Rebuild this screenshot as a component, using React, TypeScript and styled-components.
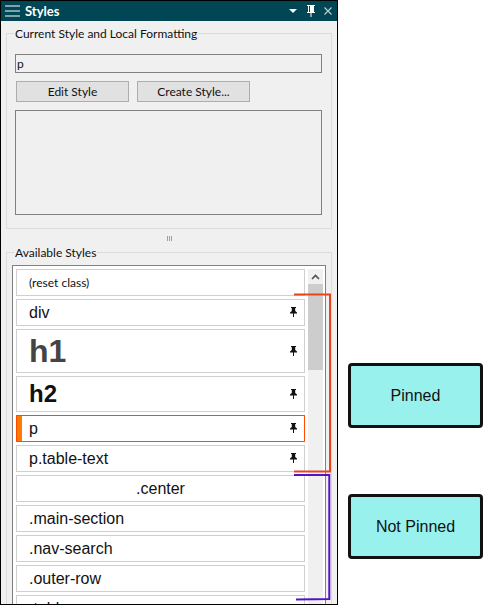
import React from "react";
import styled, { createGlobalStyle } from "styled-components";

const GlobalStyle = createGlobalStyle`
    html, body {
        margin: 0;
        padding: 0;
        background: #fff;
    }
`;

const Page = styled.div`
    position: relative;
    display: flex;
    width: 492px;
    height: 605px;
    overflow: hidden;
    font-family: "Lato", "Noto Sans", sans-serif;
    font-size: 12px;
    color: #111;
`;

const Panel = styled.div`
    width: 338px;
    height: 605px;
    flex: none;
    box-sizing: border-box;
    border: 1px solid #000;
    background: #f0f0f0;
    overflow: hidden;
`;

const TitleBar = styled.div`
    display: flex;
    align-items: center;
    height: 20px;
    margin-bottom: 4px;
    padding: 0 5px 0 4px;
    background: #004654;
    color: #fff;
`;

const TitleText = styled.span`
    margin-left: 5px;
    font-size: 13px;
    font-weight: 700;
    flex: 1;
`;

const TitleButtons = styled.div`
    display: flex;
    align-items: center;
    gap: 9px;
`;

const MenuArrow = styled.svg`
    margin-right: 1px;
`;

const Group = styled.fieldset<{ $height: number }>`
    box-sizing: border-box;
    height: ${(p) => p.$height}px;
    margin: 0 5px;
    padding: 0;
    min-width: 0;
    border: 1px solid #dcdcdc;
`;

const Legend = styled.legend`
    margin-left: 7px;
    padding: 0 1px;
    height: 16px;
    line-height: 18px;
`;

const CurrentBody = styled.div`
    display: flex;
    flex-direction: column;
    padding: 13px 9px 0 8px;
`;

const TextField = styled.div`
    box-sizing: border-box;
    height: 19px;
    padding-left: 1px;
    border: 1px solid #808080;
    line-height: 18px;
`;

const ButtonRow = styled.div`
    display: flex;
    gap: 8px;
    margin: 8px 0 8px 1px;
`;

const PushButton = styled.div`
    box-sizing: border-box;
    width: 113px;
    height: 21px;
    border: 1px solid #adadad;
    background: #e1e1e1;
    text-align: center;
    line-height: 20px;
`;

const PreviewBox = styled.div`
    box-sizing: border-box;
    height: 105px;
    border: 1px solid #808080;
    background: #f0f0f0;
`;

const Splitter = styled.div`
    display: flex;
    justify-content: center;
    gap: 1px;
    height: 15px;
    padding-top: 7px;
    box-sizing: border-box;

    i {
        width: 1px;
        height: 5px;
        background: #a0a0a0;
    }
`;

const ListFrame = styled.div`
    display: flex;
    box-sizing: border-box;
    height: 400px;
    margin: 5px 5px 0 5px;
    padding: 3px 2px 0 3px;
    border: 1px solid #808080;
    background: #fff;
`;

const List = styled.div`
    display: flex;
    flex-direction: column;
    gap: 3px;
    width: 289px;
    flex: none;
`;

const Item = styled.div<{ $height?: number; $size?: number; $bold?: boolean; $active?: boolean; $center?: boolean; $ui?: boolean }>`
    position: relative;
    display: flex;
    align-items: center;
    justify-content: ${(p) => (p.$center ? "center" : "flex-start")};
    box-sizing: border-box;
    flex: none;
    height: ${(p) => p.$height ?? 27}px;
    padding-left: ${(p) => (p.$center ? 0 : 12)}px;
    border: 1px solid ${(p) => (p.$active ? "#ff4a00" : "#cfcfcf")};
    background: #fff;
    font-family: ${(p) => (p.$ui ? '"Lato", sans-serif' : '"Liberation Sans", Arial, sans-serif')};
    font-size: ${(p) => p.$size ?? 16}px;
    font-weight: ${(p) => (p.$bold ? 700 : 400)};
`;

const ActiveMark = styled.span`
    position: absolute;
    left: 0;
    top: 0;
    bottom: 0;
    width: 5px;
    background: #ff7a00;
`;

const ItemPin = styled.span`
    position: absolute;
    right: 7px;
    top: 0;
    bottom: 1px;
    display: flex;
    align-items: center;
`;

const Scrollbar = styled.div`
    display: flex;
    flex-direction: column;
    width: 15px;
    flex: none;
    margin-left: 3px;
    background: #f0f0f0;
`;

const ScrollArrow = styled.div`
    display: flex;
    align-items: center;
    justify-content: center;
    height: 15px;
`;

const ScrollThumb = styled.div`
    height: 86px;
    background: #cdcdcd;
`;

const Notes = styled.div`
    display: flex;
    flex-direction: column;
    gap: 66px;
    padding: 363px 0 0 10px;
`;

const Note = styled.div`
    display: flex;
    align-items: center;
    justify-content: center;
    box-sizing: border-box;
    width: 135px;
    height: 65px;
    border: 3px solid #111;
    border-radius: 4px;
    background: #99f1ee;
    font-family: "Liberation Sans", Arial, sans-serif;
    font-size: 16px;
    color: #111;
`;

const Brackets = styled.svg`
    position: absolute;
    left: 0;
    top: 0;
    pointer-events: none;
`;

const MenuIcon = () => (
    <svg width="15" height="12" viewBox="0 0 15 12">
        <path d="M0 1h15M0 6h15M0 11h15" stroke="#fff" strokeWidth="1" />
    </svg>
);

const PinSolid = () => (
    <svg width="7" height="10" viewBox="0 0 7 10">
        <path d="M1 0h5v1H5.200v3L7 5.500V6.500H4V10H3V6.500H0V5.500L1.800 4V1H1z" fill="#111" />
    </svg>
);

const PinOutline = () => (
    <svg width="8" height="12" viewBox="0 0 8 12">
        <path d="M0 0h8v1H7v6h1v1H4.500v4h-1V8H0V7h1V1H0zM2 1v6h1V1z" fill="#fff" />
    </svg>
);

const rows = [
    { label: "(reset class)", size: 12, ui: true },
    { label: "div", pinned: true },
    { label: "h1", pinned: true, height: 44, size: 32, bold: true, color: "#444" },
    { label: "h2", pinned: true, height: 36, size: 24, bold: true },
    { label: "p", pinned: true, active: true },
    { label: "p.table-text", pinned: true },
    { label: ".center", center: true },
    { label: ".main-section" },
    { label: ".nav-search" },
    { label: ".outer-row" },
    { label: ".table" },
];

export default function App() {
    return (
        <Page>
            <GlobalStyle />
            <Panel>
                <TitleBar>
                    <MenuIcon />
                    <TitleText>Styles</TitleText>
                    <TitleButtons>
                        <MenuArrow width="8" height="4" viewBox="0 0 8 4">
                            <path d="M0 0h8L4 4z" fill="#fff" />
                        </MenuArrow>
                        <PinOutline />
                        <svg width="8" height="8" viewBox="0 0 8 8">
                            <path d="M.5.500l7 7M7.500.500l-7 7" stroke="#b9ccd0" strokeWidth="1.200" />
                        </svg>
                    </TitleButtons>
                </TitleBar>
                <Group $height={204}>
                    <Legend>Current Style and Local Formatting</Legend>
                    <CurrentBody>
                        <TextField>p</TextField>
                        <ButtonRow>
                            <PushButton>Edit Style</PushButton>
                            <PushButton>Create Style...</PushButton>
                        </ButtonRow>
                        <PreviewBox />
                    </CurrentBody>
                </Group>
                <Splitter>
                    <i />
                    <i />
                    <i />
                </Splitter>
                <Group $height={400}>
                    <Legend>Available Styles</Legend>
                    <ListFrame>
                        <List>
                            {rows.map((row) => (
                                <Item
                                    key={row.label}
                                    $height={row.height}
                                    $size={row.size}
                                    $bold={row.bold}
                                    $active={row.active}
                                    $center={row.center}
                                    $ui={row.ui}
                                    style={row.color ? { color: row.color } : undefined}
                                >
                                    {row.active && <ActiveMark />}
                                    {row.label}
                                    {row.pinned && (
                                        <ItemPin>
                                            <PinSolid />
                                        </ItemPin>
                                    )}
                                </Item>
                            ))}
                        </List>
                        <Scrollbar>
                            <ScrollArrow>
                                <svg width="9" height="6" viewBox="0 0 9 6">
                                    <path d="M1 5l3.500-3.500L8 5" fill="none" stroke="#505050" strokeWidth="1.600" />
                                </svg>
                            </ScrollArrow>
                            <ScrollThumb />
                        </Scrollbar>
                    </ListFrame>
                </Group>
            </Panel>
            <Notes>
                <Note>Pinned</Note>
                <Note>Not Pinned</Note>
            </Notes>
            <Brackets width="492" height="605" viewBox="0 0 492 605">
                <path d="M294 294.500H330V471.500H294" fill="none" stroke="#ea431c" strokeWidth="2" />
                <path d="M294 475H329.300V599L296 599.500" fill="none" stroke="#5512c8" strokeWidth="2" />
            </Brackets>
        </Page>
    );
}
